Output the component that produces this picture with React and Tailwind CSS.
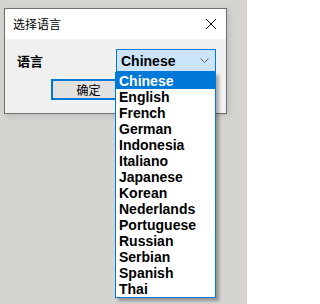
const languages = [
  'Chinese',
  'English',
  'French',
  'German',
  'Indonesia',
  'Italiano',
  'Japanese',
  'Korean',
  'Nederlands',
  'Portuguese',
  'Russian',
  'Serbian',
  'Spanish',
  'Thai',
];

const cjk = { fontFamily: '"Microsoft YaHei", "Noto Sans CJK SC", sans-serif' };
const sys = { fontFamily: '"Liberation Sans", Arial, sans-serif' };

export default function App() {
  return (
    <div className="relative w-[247px] h-[304px] bg-[#d5d4d0] pl-[4px] pt-[8px] overflow-hidden">
      {/* dialog */}
      <div className="w-[223px] h-[106px] border border-[#6f6f6f] bg-[#f0f0f0] flex flex-col shadow-[2px_2px_6px_rgba(0,0,0,0.12)]">
        <div className="h-[30px] bg-white flex items-center justify-between pl-[8px] pr-[8px]">
          <span className="text-[12px] text-black leading-none" style={cjk}>选择语言</span>
          <svg width="12" height="12" viewBox="0 0 12 12" className="mr-[1px]">
            <path d="M1 1 L11 11 M11 1 L1 11" stroke="#111" strokeWidth="1" fill="none" />
          </svg>
        </div>
        <div className="flex-1 pt-[10px]">
          <div className="flex items-center h-[23px]">
            <span className="ml-[12px] text-[13px] font-bold text-black leading-none" style={cjk}>语言</span>
            <div className="ml-auto mr-[10px] w-[100px] h-[23px] border border-[#0078d7] bg-[#cce4f7] flex items-center pl-[4px] pr-[6px]">
              <span className="text-[14px] font-bold text-black leading-none" style={sys}>Chinese</span>
              <svg width="9" height="5" viewBox="0 0 9 5" className="ml-auto">
                <path d="M0.5 0.5 L4.5 4.5 L8.5 0.5" stroke="#606060" strokeWidth="1" fill="none" />
              </svg>
            </div>
          </div>
          <div className="mt-[7px] ml-[46px] w-[75px] h-[21px] border-2 border-[#0078d7] bg-[#e1e1e1] flex items-center justify-center">
            <span className="text-[12px] text-black leading-none" style={cjk}>确定</span>
          </div>
        </div>
      </div>

      {/* open dropdown list */}
      <div className="absolute left-[115px] top-[72px] w-[101px] border border-[#0078d7] bg-white shadow-[3px_3px_3px_rgba(0,0,0,0.3)]">
        {languages.map((lang, i) => (
          <div
            key={lang}
            className={
              i === 0
                ? 'h-[16px] flex items-center pl-[3px] bg-[#0078d7] text-white'
                : 'h-[16px] flex items-center pl-[3px] text-black'
            }
          >
            <span className="text-[14px] font-bold leading-none" style={sys}>{lang}</span>
          </div>
        ))}
      </div>
    </div>
  );
}
